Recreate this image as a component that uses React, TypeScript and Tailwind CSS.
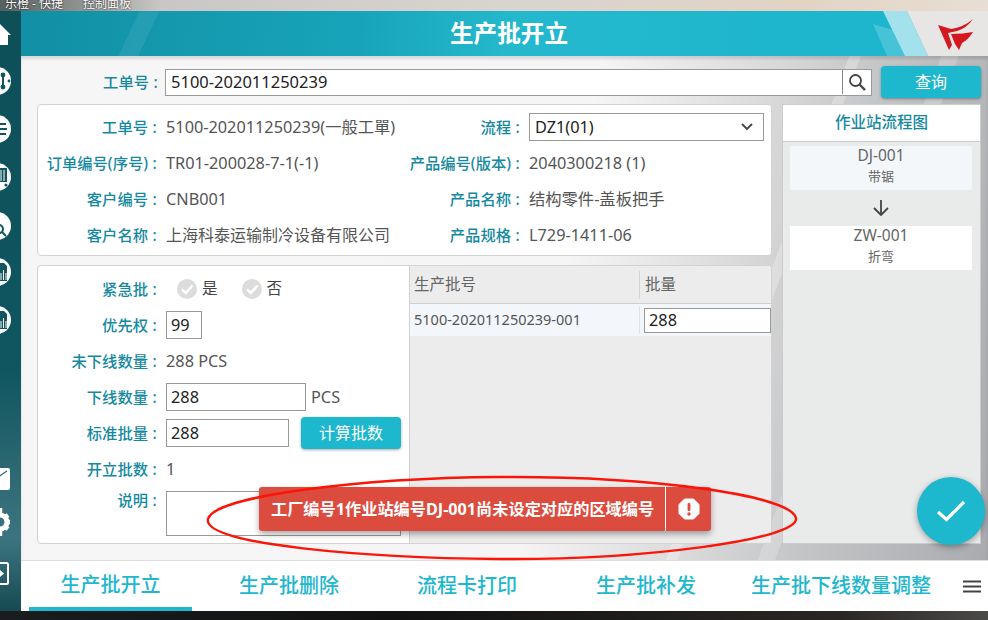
import React from "react";

function Side({ children, h = 28, className = "" }: { children: React.ReactNode; h?: number; className?: string }) {
  return (
    <svg width="21" height={h} viewBox={`0 0 21 ${h}`} className={"block shrink-0 " + className}>
      {children}
    </svg>
  );
}

function Disc({ children, className = "" }: { children?: React.ReactNode; className?: string }) {
  return (
    <Side className={className}>
      <circle cx="-3" cy="14" r="14" fill="#fff" />
      {children}
    </Side>
  );
}

function Doc() {
  return (
    <>
      <path d="M-2 5 H4 L7 8 V23 H-2 Z" fill="#0f5660" />
      <path d="M1 15 V22 M3.5 12 V22 M6 15 V22" stroke="#fff" strokeWidth="1" />
    </>
  );
}

function Label({ children, w = "w-[123px]" }: { children: React.ReactNode; w?: string }) {
  return (
    <div className={`${w} shrink-0 text-right text-[#14899f] text-[15.3px] font-medium whitespace-nowrap`}>
      {children}<span className="inline-block w-[13px] text-center">:</span>
    </div>
  );
}

function InfoRow({ label, value, w, cn = "" }: { label: string; value: React.ReactNode; w?: string; cn?: string }) {
  return (
    <div className="flex items-center h-9">
      <Label w={w}>{label}</Label>
      <div className={`ml-[5px] text-[#555] whitespace-nowrap ${cn}`}>{value}</div>
    </div>
  );
}

function Check({ label }: { label: string }) {
  return (
    <div className="flex items-center gap-[5px] text-[#444] text-[15.5px]">
      <svg width="20" height="20" viewBox="0 0 20 20">
        <circle cx="10" cy="10" r="10" fill="#dcdcdc" />
        <path d="M5 10.5 L8.8 14 L15.5 6.5" fill="none" stroke="#fff" strokeWidth="2.6" />
      </svg>
      <span>{label}</span>
    </div>
  );
}

function Field({ w, value, h = "h-[28px]" }: { w: string; value: string; h?: string }) {
  return (
    <div className={`${w} ${h} border border-[#999] bg-white pl-1 flex items-center text-[#222]`}>{value}</div>
  );
}

export default function App() {
  return (
    <div className="relative w-[988px] h-[620px] overflow-hidden flex flex-col bg-[#111] font-['Noto_Sans','Noto_Sans_CJK_SC',sans-serif] text-[16.3px]">
      {/* desktop strip */}
      <div className="h-[11px] shrink-0 flex items-start gap-[20px] overflow-hidden bg-[linear-gradient(90deg,#55605f_0px,#c9c7c5_160px,#d8d4d0_500px,#e2d3c4_800px,#e8ded5_988px)] pl-[5px] text-[12px] leading-[12px] text-white [text-shadow:0_0_2px_#000]">
        <span className="-mt-[2px]">乐橙 - 快捷</span>
        <span className="-mt-[2px]">控制面板</span>
      </div>

      <div className="flex flex-1 min-h-0">
        {/* sidebar */}
        <div className="w-[21px] shrink-0 flex flex-col overflow-hidden bg-[linear-gradient(180deg,#0e4f58_0%,#0f5660_60%,#2f6a74_78%,#3b7480_88%,#174a52_100%)]">
          <Side h={28} className="mt-[7px]">
            <path d="M-6 13 L0 6 L11 17 H8 V27 H-6 Z" fill="#fff" />
          </Side>
          <Disc className="mt-[21px]">
            <path d="M3 8 V20" stroke="#0f5660" strokeWidth="2" />
            <circle cx="3" cy="8" r="2.4" fill="#0f5660" />
            <circle cx="3" cy="20" r="2.4" fill="#0f5660" />
            <circle cx="-3" cy="14" r="2" fill="#0f5660" />
            <circle cx="9" cy="14" r="1.4" fill="#0f5660" />
          </Disc>
          <Disc className="mt-[20px]">
            <path d="M-2 9 H6 M-2 14 H7 M-2 19 H6" stroke="#0f5660" strokeWidth="2" />
          </Disc>
          <Disc className="mt-[20px]">
            <path d="M-2 5 H7 V19 H-2 Z" fill="#0f5660" />
            <path d="M1 7 V18 M4 7 V18" stroke="#fff" strokeWidth="1" />
            <circle cx="6" cy="22" r="1.6" fill="#0f5660" />
          </Disc>
          <Disc className="mt-[21px]">
            <circle cx="-1" cy="17" r="4" fill="none" stroke="#0f5660" strokeWidth="2" />
            <path d="M2 20 L6 24" stroke="#0f5660" strokeWidth="2" />
          </Disc>
          <Disc className="mt-[18px]"><Doc /></Disc>
          <Disc className="mt-[20px]"><Doc /></Disc>
          <Side h={28} className="mt-[129px]">
            <rect x="-6" y="5" width="16" height="22" rx="2" fill="#fff" />
            <path d="M-2 14 L7 8" stroke="#2f6a74" strokeWidth="1.3" />
          </Side>
          <Side h={28} className="mt-[17px]">
            <circle cx="0" cy="14" r="7" fill="none" stroke="#fff" strokeWidth="5" />
            <path d="M0 -3 V5 M0 23 V31 M8 7 L4 10 M8 21 L4 18 M10 14 H6" stroke="#fff" strokeWidth="4.5" />
          </Side>
          <Side h={28} className="mt-[24px]">
            <rect x="-6" y="3" width="14" height="21" rx="1.5" fill="none" stroke="#fff" strokeWidth="2" />
            <path d="M0 10 L4 13.5 L0 17 Z" fill="#fff" />
          </Side>
        </div>

        {/* content */}
        <div className="flex-1 min-w-0 flex flex-col">
          {/* header */}
          <div className="relative h-[45px] shrink-0 flex items-center justify-center pl-[9px] pt-[1px] overflow-hidden bg-[linear-gradient(115deg,transparent_0%,transparent_12%,rgba(255,255,255,0.07)_12%,rgba(255,255,255,0.07)_14%,transparent_14%),linear-gradient(95deg,#128fa4_0%,#17a4ba_35%,#24b8cd_50%,#1ab5cd_100%)]">
            <span className="text-white text-[23.6px] font-bold">生产批开立</span>
            <div className="absolute right-[83px] top-0 h-full w-[32px] bg-[#47c3d8] [clip-path:polygon(0_13px,20px_19px,32px_45px,14px_45px)]" />
            <div className="absolute right-[60px] top-0 h-full w-[45px] bg-[#a3e2ec] [clip-path:polygon(0_0,24px_0,45px_100%,22px_100%)]" />
            <div className="absolute right-0 top-0 h-full w-[81px] bg-[#e8e6e4] [clip-path:polygon(0_0,100%_0,100%_100%,21px_100%)]" />
            <svg width="36" height="32" viewBox="0 0 36 32" className="absolute right-[14px] top-[8px]">
              <path d="M0 6 L13 10 Q26 8 35 0 Q29 9 19 12 L10 14 L14 26 L11 31 Z" fill="#d5171f" />
              <path d="M13 15 Q25 15 35 13 Q30 21 24 24 L21 31 L17 25 Z" fill="#d5171f" />
            </svg>
          </div>

          {/* main */}
          <div className="flex-1 min-h-0 pl-4 pr-[7px] pt-[10px] shadow-[inset_0_3px_3px_rgba(0,0,0,0.12)] bg-[linear-gradient(110deg,transparent_72%,rgba(255,255,255,0.25)_72%,rgba(255,255,255,0.25)_73%,transparent_73%,transparent_80%,rgba(255,255,255,0.2)_80%,rgba(255,255,255,0.2)_81.5%,transparent_81.5%),linear-gradient(100deg,#f6f6f6_0%,#f5f5f5_55%,#dcdcdc_70%,#c4c5c7_82%,#a9abae_100%)]">
            {/* search row */}
            <div className="flex items-center h-[32px]">
              <div className="w-[128px] shrink-0 pr-[3px] text-right text-[#14899f] text-[15.3px] font-medium">
                工单号<span className="inline-block w-[13px] text-center">:</span>
              </div>
              <div className="w-[707px] h-[27px] border border-[#999] bg-white flex items-center text-[#222] shrink-0">
                <span className="flex-1 pl-[5px] text-[16.5px]">5100-202011250239</span>
                <div className="w-[29px] h-[24px] border-l border-[#888] flex items-center justify-center">
                  <svg width="18" height="18" viewBox="0 0 18 18" fill="none" stroke="#444" strokeWidth="1.8">
                    <circle cx="7.5" cy="7.5" r="5.5" />
                    <path d="M11.5 11.5 L17 17" strokeWidth="2.4" />
                  </svg>
                </div>
              </div>
              <button className="ml-[9px] w-[100px] h-[32px] rounded-[4px] bg-[#1db7ce] text-white text-[16px] shadow-[0_1px_3px_rgba(0,0,0,0.35)]">查询</button>
            </div>

            {/* body */}
            <div className="mt-[6px] flex gap-[10px]">
              <div className="w-[735px] shrink-0 flex flex-col gap-[9px]">
                <div className="h-[152px] rounded-[4px] border border-[#d2d2d2] bg-white pt-[4px] flex">
                  <div className="w-[368px]">
                    <InfoRow label="工单号" value="5100-202011250239(一般工單)" />
                    <InfoRow label="订单编号(序号)" value="TR01-200028-7-1(-1)" />
                    <InfoRow label="客户编号" value="CNB001" />
                    <InfoRow label="客户名称" value="上海科泰运输制冷设备有限公司" cn="text-[16px]" />
                  </div>
                  <div className="flex-1">
                    <div className="flex items-center h-9">
                      <Label w="w-[118px]">流程</Label>
                      <div className="ml-[5px] w-[235px] h-[28px] border border-[#999] flex items-center justify-between pl-[5px] pr-[10px] text-[#222]">
                        <span>DZ1(01)</span>
                        <svg width="12" height="8" viewBox="0 0 12 8" fill="none" stroke="#444" strokeWidth="1.8">
                          <path d="M1 1 L6 6 L11 1" />
                        </svg>
                      </div>
                    </div>
                    <InfoRow w="w-[118px]" label="产品编号(版本)" value="2040300218 (1)" />
                    <InfoRow w="w-[118px]" label="产品名称" value="结构零件-盖板把手" />
                    <InfoRow w="w-[118px]" label="产品规格" value="L729-1411-06" />
                  </div>
                </div>

                <div className="h-[279px] rounded-[4px] border border-[#d2d2d2] bg-white flex overflow-hidden">
                  <div className="w-[371px] shrink-0 pt-[5px]">
                    <div className="flex items-center h-9">
                      <Label>紧急批</Label>
                      <div className="ml-[16px] flex gap-[24px]">
                        <Check label="是" />
                        <Check label="否" />
                      </div>
                    </div>
                    <div className="flex items-center h-9">
                      <Label>优先权</Label>
                      <div className="ml-[5px]"><Field w="w-[36px]" value="99" /></div>
                    </div>
                    <InfoRow label="未下线数量" value="288 PCS" />
                    <div className="flex items-center h-9">
                      <Label>下线数量</Label>
                      <div className="ml-[5px]"><Field w="w-[140px]" value="288" /></div>
                      <span className="ml-[5px] text-[#555]">PCS</span>
                    </div>
                    <div className="flex items-center h-9">
                      <Label>标准批量</Label>
                      <div className="ml-[5px]"><Field w="w-[123px]" value="288" /></div>
                      <button className="ml-[12px] w-[100px] h-[32px] rounded-[4px] bg-[#1db7ce] text-white text-[16px] shadow-[0_1px_3px_rgba(0,0,0,0.35)]">计算批数</button>
                    </div>
                    <InfoRow label="开立批数" value="1" />
                    <div className="flex items-start pt-[2px]">
                      <Label>说明</Label>
                      <div className="ml-[5px] mt-[2px] w-[235px] h-[45px] border border-[#999]" />
                    </div>
                  </div>
                  <div className="flex-1 min-w-0 border-l border-[#d2d2d2] bg-[#ececec]">
                    <div className="h-[38px] flex items-center border-b border-[#d0d0d0] text-[#666] text-[15.5px]">
                      <div className="w-[230px] h-[28px] pl-[4px] border-r border-[#d5d5d5] flex items-center">生产批号</div>
                      <div className="pl-[5px]">批量</div>
                    </div>
                    <div className="h-[32px] flex items-center bg-[#f3f7fb]">
                      <div className="w-[230px] h-[28px] pl-[4px] border-r border-[#e3e3e3] flex items-center text-[14.5px] text-[#555] whitespace-nowrap">5100-202011250239-001</div>
                      <div className="ml-[4px] flex-1 h-[25px] border border-[#999] bg-white pl-[4px] flex items-center text-[#222]">288</div>
                    </div>
                  </div>
                </div>
              </div>

              {/* flow panel */}
              <div className="w-[199px] h-[440px] border border-[#ccc] bg-[#e9ebeb]">
                <div className="h-[37px] bg-white border-b border-[#ccc] flex items-center justify-center text-[#14899f] font-medium text-[15.5px]">作业站流程图</div>
                <div className="pl-[7px] pr-[8px] pt-[4px] flex flex-col items-stretch">
                  <div className="h-[44px] pb-1 bg-[#f3f7fa] flex flex-col items-center justify-center text-[#666]">
                    <div className="text-[15.5px] leading-[20px]">DJ-001</div>
                    <div className="text-[13px] leading-[22px]">带锯</div>
                  </div>
                  <div className="h-[36px] flex items-center justify-center">
                    <svg width="18" height="18" viewBox="0 0 18 18" fill="none" stroke="#444" strokeWidth="1.8">
                      <path d="M9 1 V16 M2 9 L9 16 L16 9" />
                    </svg>
                  </div>
                  <div className="h-[44px] pb-1 bg-white flex flex-col items-center justify-center text-[#666]">
                    <div className="text-[15.5px] leading-[20px]">ZW-001</div>
                    <div className="text-[13px] leading-[22px]">折弯</div>
                  </div>
                </div>
              </div>
            </div>
          </div>

          {/* bottom nav */}
          <div className="h-[51px] shrink-0 bg-white border-t border-[#ddd] flex items-stretch text-[#1db7ce] text-[20px] font-medium whitespace-nowrap">
            <div className="ml-[8px] w-[163px] flex items-center justify-center border-b-[4px] border-[#1db7ce] pt-[2px]">生产批开立</div>
            <div className="w-[194px] flex items-center justify-center">生产批删除</div>
            <div className="w-[162px] flex items-center justify-center">流程卡打印</div>
            <div className="w-[196px] flex items-center justify-center">生产批补发</div>
            <div className="w-[194px] flex items-center justify-center">生产批下线数量调整</div>
            <div className="ml-[25px] flex items-center">
              <svg width="18" height="13" viewBox="0 0 18 13" stroke="#444" strokeWidth="2">
                <path d="M0 1.5 H18 M0 6.5 H18 M0 11.5 H18" />
              </svg>
            </div>
          </div>
        </div>
      </div>

      {/* black bottom strip */}
      <div className="h-[9px] shrink-0 bg-[linear-gradient(90deg,#1a1c1e,#111_40%,#2a2624_85%,#4a4a48)]" />

      {/* toast */}
      <div className="absolute left-[259px] top-[487px] w-[452px] h-[44px] rounded-[3px] bg-[#dc4c3e] flex items-center text-white text-[16.2px] font-bold shadow-[0_3px_6px_rgba(0,0,0,0.35)]">
        <div className="w-[407px] h-full pl-[12px] flex items-center border-r border-white whitespace-nowrap">工厂编号1作业站编号DJ-001尚未设定对应的区域编号</div>
        <div className="flex-1 flex items-center justify-center">
          <svg width="22" height="22" viewBox="0 0 22 22">
            <path d="M6.5 1 H15.5 L21 6.5 V15.5 L15.5 21 H6.5 L1 15.5 V6.5 Z" fill="#fff" stroke="#fff" strokeLinejoin="round" />
            <rect x="9.6" y="5" width="2.8" height="8" rx="1" fill="#dc4c3e" />
            <circle cx="11" cy="16" r="1.7" fill="#dc4c3e" />
          </svg>
        </div>
      </div>

      {/* hand-drawn ellipse */}
      <svg width="988" height="620" viewBox="0 0 988 620" className="absolute inset-0 pointer-events-none">
        <path d="M208 519 C214 496 360 478 500 477 C650 476 790 495 796 518 C800 540 640 560 500 559 C370 558 202 545 208 519 Z" fill="none" stroke="#fb1509" strokeWidth="2.4" />
      </svg>

      {/* FAB */}
      <button className="absolute left-[917px] top-[477px] w-[68px] h-[68px] rounded-full bg-[#1db7ce] flex items-center justify-center shadow-[0_2px_6px_rgba(0,0,0,0.35)]">
        <svg width="28" height="22" viewBox="0 0 28 22" fill="none" stroke="#fff" strokeWidth="3.2">
          <path d="M1 12 L9.5 19.5 L27 2" />
        </svg>
      </button>
    </div>
  );
}
